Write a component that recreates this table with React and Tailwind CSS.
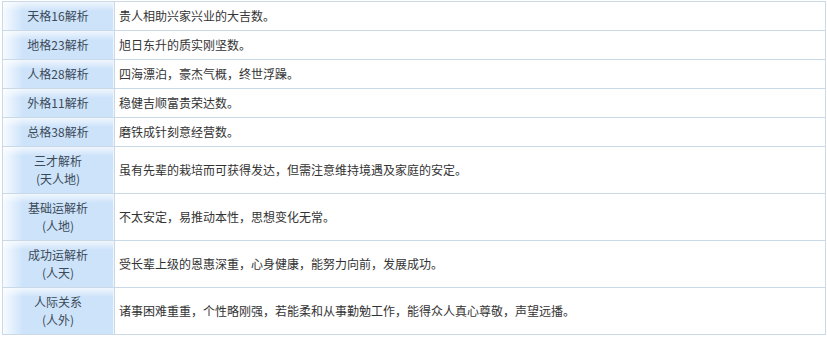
const rows = [
    { label: ['天格16解析'], text: '贵人相助兴家兴业的大吉数。' },
    { label: ['地格23解析'], text: '旭日东升的质实刚坚数。' },
    { label: ['人格28解析'], text: '四海漂泊，豪杰气概，终世浮躁。' },
    { label: ['外格11解析'], text: '稳健吉顺富贵荣达数。' },
    { label: ['总格38解析'], text: '磨铁成针刻意经营数。' },
    { label: ['三才解析', '(天人地)'], text: '虽有先辈的栽培而可获得发达，但需注意维持境遇及家庭的安定。' },
    { label: ['基础运解析', '(人地)'], text: '不太安定，易推动本性，思想变化无常。' },
    { label: ['成功运解析', '(人天)'], text: '受长辈上级的恩惠深重，心身健康，能努力向前，发展成功。' },
    { label: ['人际关系', '(人外)'], text: '诸事困难重重，个性略刚强，若能柔和从事勤勉工作，能得众人真心尊敬，声望远播。' },
];

const App = () => {
    return (
        <div className="w-[827px] h-[339px] bg-white pt-px pl-[2px] font-['Microsoft_YaHei','Noto_Sans_CJK_SC',sans-serif] text-[12px]">
            <div className="w-[824px] border-t border-l border-r border-[#c9d9e7]">
                {rows.map((row, i) => (
                    <div
                        key={i}
                        className={`flex border-b border-[#c9d9e7] ${row.label.length > 1 ? 'h-[47px]' : 'h-[29px]'}`}
                    >
                        {/* label cell with the soft blue gradient */}
                        <div className="w-[110px] shrink-0 flex flex-col items-center justify-center leading-[18px] text-[#3c4a58] bg-[linear-gradient(to_bottom,rgba(255,255,255,0.7),rgba(255,255,255,0)_9px),linear-gradient(to_right,#f7fbff,#cde3fa_20px)]">
                            {row.label.map((l, j) => (
                                <span key={j}>{l}</span>
                            ))}
                        </div>
                        <div className="w-px bg-[#eef5fc]" />
                        <div className="flex-1 border-l border-[#c9d9e7] flex items-center pl-[4px] text-[#333]">
                            {row.text}
                        </div>
                    </div>
                ))}
            </div>
        </div>
    );
};

export default App;
